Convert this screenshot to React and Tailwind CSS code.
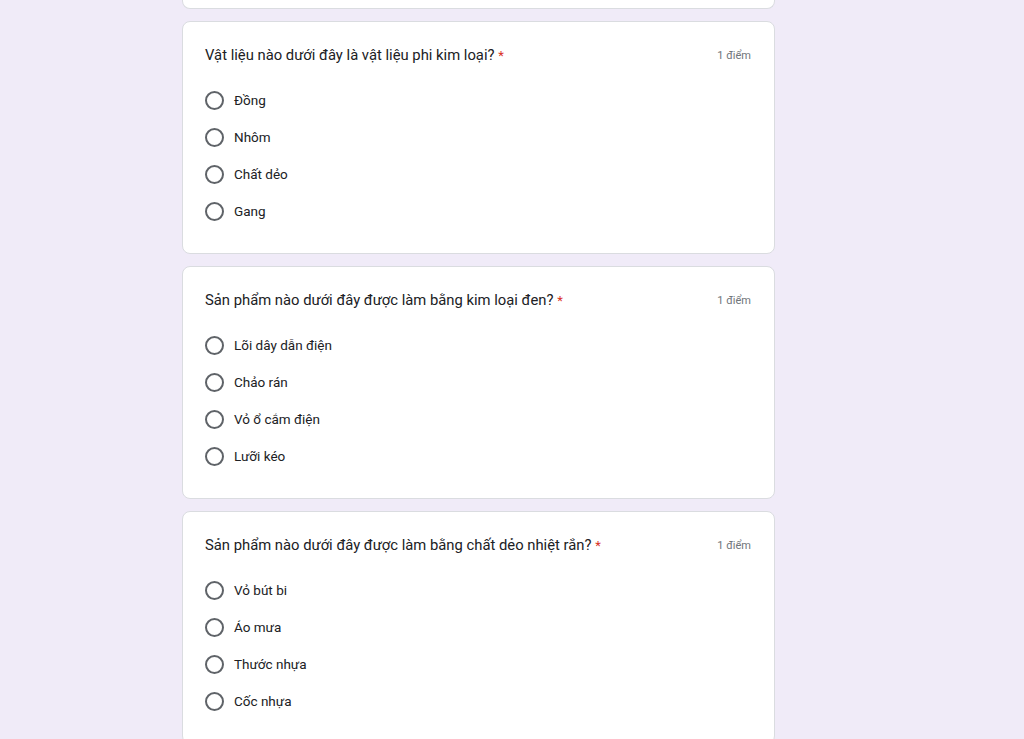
import React from "react";

const questions = [
  {
    q: "Vật liệu nào dưới đây là vật liệu phi kim loại?",
    opts: ["Đồng", "Nhôm", "Chất dẻo", "Gang"],
  },
  {
    q: "Sản phẩm nào dưới đây được làm bằng kim loại đen?",
    opts: ["Lõi dây dẫn điện", "Chảo rán", "Vỏ ổ cắm điện", "Lưỡi kéo"],
  },
  {
    q: "Sản phẩm nào dưới đây được làm bằng chất dẻo nhiệt rắn?",
    opts: ["Vỏ bút bi", "Áo mưa", "Thước nhựa", "Cốc nhựa"],
  },
];

function Card({ q, opts }) {
  return (
    <div className="bg-white border border-[#dadce0] rounded-lg pt-[23px] pb-[23px] pl-[22px] pr-[23px]">
      <div className="flex items-center justify-between h-[20px]">
        <div className="text-[14.8px] text-[#202124]">
          {q} <span className="text-[#d93025] text-[13px]">*</span>
        </div>
        <div className="text-[11px] text-[#70757a] pt-[2px]">1 điểm</div>
      </div>
      <div className="mt-[17px] flex flex-col">
        {opts.map((o) => (
          <div key={o} className="flex items-center h-[37px]">
            <div className="w-[19px] h-[19px] rounded-full border-2 border-[#5f6368]" />
            <span className="ml-[10px] text-[13.5px] text-[#202124]">{o}</span>
          </div>
        ))}
      </div>
    </div>
  );
}

export default function App() {
  return (
    <div
      className="bg-[#f0ebf8] overflow-hidden h-[739px]"
      style={{ fontFamily: "Roboto, 'Noto Sans', sans-serif" }}
    >
      <div className="w-[593px] ml-[182px] flex flex-col gap-[12px]">
        <div className="h-[9px] bg-white border border-t-0 border-[#dadce0] rounded-b-lg" />
        {questions.map((c) => (
          <Card key={c.q} {...c} />
        ))}
      </div>
    </div>
  );
}
